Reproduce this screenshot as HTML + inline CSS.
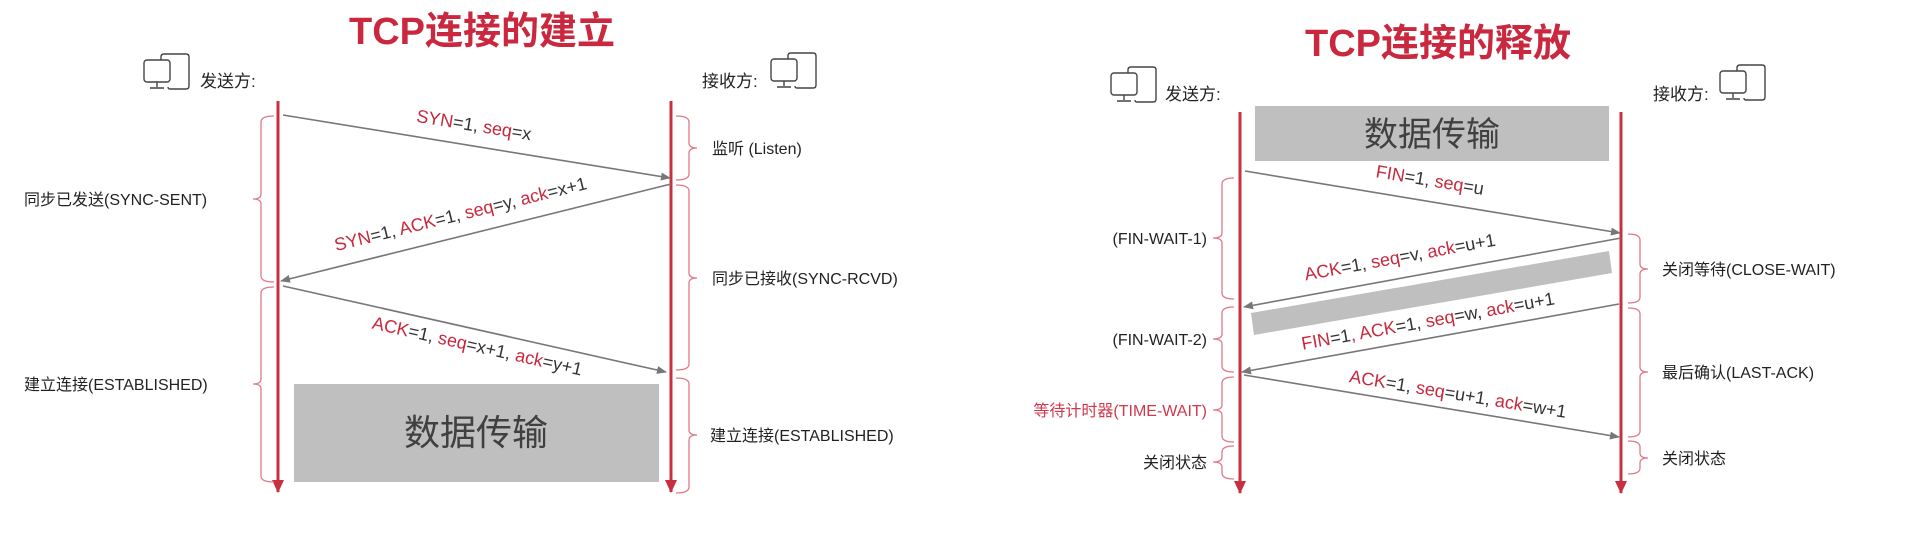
<!DOCTYPE html>
<html><head><meta charset="utf-8"><style>
html,body{margin:0;padding:0;background:#fff;}
svg{display:block;}
text{font-family:"Liberation Sans","Noto Sans CJK SC",sans-serif;}
.t{font-size:38px;font-weight:bold;fill:#c9283e;}
.l{font-size:16px;fill:#222;}
.m{font-size:17px;fill:#222;}
.r{fill:#c8283c;}
.lab{font-size:18px;fill:#333;}
.br{fill:none;stroke:#e07a88;stroke-width:1.3;}
.ar{stroke:#777;stroke-width:1.6;fill:none;}
.ico{fill:none;stroke:#444;stroke-width:1.4;}
</style></head><body>
<svg width="1930" height="559" viewBox="0 0 1930 559" xmlns="http://www.w3.org/2000/svg">
<defs>
<marker id="ah" markerWidth="10" markerHeight="8" refX="9" refY="4" orient="auto" markerUnits="userSpaceOnUse"><path d="M0,0 L10,4 L0,8 z" fill="#777"/></marker>
<marker id="rh" markerWidth="14" markerHeight="12" refX="12" refY="6" orient="auto" markerUnits="userSpaceOnUse"><path d="M0,0 L13,6 L0,12 z" fill="#c9303f"/></marker>
<g id="icon"><rect x="0" y="6" width="26" height="22" rx="3" class="ico"/><path d="M13,28 V33 M6,34 H20" class="ico"/><path d="M17,6 V3 Q17,0 20,0 H42 Q45,0 45,3 V32 Q45,35 42,35 H26 Q24,35 24,33" class="ico"/></g>
</defs>

<!-- LEFT PANEL -->
<text x="482" y="44" text-anchor="middle" class="t">TCP连接的建立</text>
<use href="#icon" x="144" y="54"/>
<text x="200" y="87" class="m">发送方:</text>
<text x="702" y="87" class="m">接收方:</text>
<use href="#icon" x="771" y="53"/>

<line x1="278" y1="101" x2="278" y2="492" stroke="#c9303f" stroke-width="3" marker-end="url(#rh)"/>
<line x1="671" y1="101" x2="671" y2="492" stroke="#c9303f" stroke-width="3" marker-end="url(#rh)"/>

<rect x="294" y="384" width="365" height="98" fill="#bfbfbf"/>
<text x="476" y="445" text-anchor="middle" style="font-size:36px;fill:#404040">数据传输</text>

<line x1="283" y1="115" x2="670" y2="178" class="ar" marker-end="url(#ah)"/>
<line x1="671" y1="184" x2="281" y2="281" class="ar" marker-end="url(#ah)"/>
<line x1="283" y1="286" x2="666" y2="372" class="ar" marker-end="url(#ah)"/>

<text class="lab" text-anchor="middle" transform="translate(473,131) rotate(9.2)"><tspan class="r">SYN</tspan>=1, <tspan class="r">seq</tspan>=x</text>
<text class="lab" text-anchor="middle" transform="translate(462,220) rotate(-13.9)"><tspan class="r">SYN</tspan>=1, <tspan class="r">ACK</tspan>=1, <tspan class="r">seq</tspan>=y, <tspan class="r">ack</tspan>=x+1</text>
<text class="lab" text-anchor="middle" transform="translate(476,352) rotate(12.7)"><tspan class="r">ACK</tspan>=1, <tspan class="r">seq</tspan>=x+1, <tspan class="r">ack</tspan>=y+1</text>

<path class="br" d="M274,116 Q261,116 261,122 L261,194 Q261,199 253,199 Q261,199 261,204 L261,276 Q261,282 274,282"/>
<path class="br" d="M274,287 Q261,287 261,293 L261,379 Q261,384 253,384 Q261,384 261,389 L261,476 Q261,482 274,482"/>
<text x="24" y="205" class="l">同步已发送(SYNC-SENT)</text>
<text x="24" y="390" class="l">建立连接(ESTABLISHED)</text>

<path class="br" d="M676,116 Q689,116 689,122 L689,143 Q689,148 697,148 Q689,148 689,153 L689,174 Q689,180 676,180"/>
<path class="br" d="M676,185 Q689,185 689,191 L689,273 Q689,278 697,278 Q689,278 689,283 L689,364 Q689,370 676,370"/>
<path class="br" d="M676,378 Q689,378 689,384 L689,430 Q689,435 697,435 Q689,435 689,440 L689,487 Q689,493 676,493"/>
<text x="712" y="154" class="l">监听 (Listen)</text>
<text x="712" y="284" class="l">同步已接收(SYNC-RCVD)</text>
<text x="710" y="441" class="l">建立连接(ESTABLISHED)</text>

<!-- RIGHT PANEL -->
<text x="1438" y="56" text-anchor="middle" class="t">TCP连接的释放</text>
<use href="#icon" x="1111" y="67"/>
<text x="1165" y="100" class="m">发送方:</text>
<text x="1653" y="100" class="m">接收方:</text>
<use href="#icon" x="1720" y="65"/>

<line x1="1240" y1="112" x2="1240" y2="493" stroke="#c9303f" stroke-width="3" marker-end="url(#rh)"/>
<line x1="1621" y1="112" x2="1621" y2="493" stroke="#c9303f" stroke-width="3" marker-end="url(#rh)"/>

<rect x="1255" y="106" width="354" height="55" fill="#bfbfbf"/>
<text x="1432" y="146" text-anchor="middle" style="font-size:34px;fill:#404040">数据传输</text>
<polygon points="1251,313 1609,251 1612,273 1254,335" fill="#bfbfbf"/>

<line x1="1245" y1="171" x2="1620" y2="233" class="ar" marker-end="url(#ah)"/>
<line x1="1621" y1="238" x2="1244" y2="307" class="ar" marker-end="url(#ah)"/>
<line x1="1619" y1="304" x2="1242" y2="372" class="ar" marker-end="url(#ah)"/>
<line x1="1244" y1="375" x2="1619" y2="437" class="ar" marker-end="url(#ah)"/>

<text class="lab" text-anchor="middle" transform="translate(1429,186) rotate(9.4)"><tspan class="r">FIN</tspan>=1, <tspan class="r">seq</tspan>=u</text>
<text class="lab" text-anchor="middle" transform="translate(1401,263) rotate(-10.4)"><tspan class="r">ACK</tspan>=1, <tspan class="r">seq</tspan>=v, <tspan class="r">ack</tspan>=u+1</text>
<text class="lab" text-anchor="middle" transform="translate(1429,327) rotate(-10.2)"><tspan class="r">FIN</tspan>=1<tspan class="r">, ACK</tspan>=1, <tspan class="r">seq</tspan>=w, <tspan class="r">ack</tspan>=u+1</text>
<text class="lab" text-anchor="middle" transform="translate(1457,400) rotate(9.4)"><tspan class="r">ACK</tspan>=1, <tspan class="r">seq</tspan>=u+1, <tspan class="r">ack</tspan>=w+1</text>

<path class="br" d="M1234,178 Q1222,178 1222,184 L1222,233 Q1222,238 1213,238 Q1222,238 1222,243 L1222,293 Q1222,299 1234,299"/>
<path class="br" d="M1234,307 Q1222,307 1222,313 L1222,334 Q1222,339 1213,339 Q1222,339 1222,344 L1222,366 Q1222,372 1234,372"/>
<path class="br" d="M1234,377 Q1222,377 1222,383 L1222,405 Q1222,410 1213,410 Q1222,410 1222,415 L1222,436 Q1222,442 1234,442"/>
<path class="br" d="M1234,446 Q1222,446 1222,452 L1222,457 Q1222,462 1213,462 Q1222,462 1222,467 L1222,473 Q1222,479 1234,479"/>
<text x="1207" y="244" text-anchor="end" class="l">(FIN-WAIT-1)</text>
<text x="1207" y="345" text-anchor="end" class="l">(FIN-WAIT-2)</text>
<text x="1207" y="416" text-anchor="end" class="l" style="fill:#d0384c">等待计时器(TIME-WAIT)</text>
<text x="1207" y="468" text-anchor="end" class="l">关闭状态</text>

<path class="br" d="M1628,234 Q1640,234 1640,240 L1640,264 Q1640,269 1648,269 Q1640,269 1640,274 L1640,297 Q1640,303 1628,303"/>
<path class="br" d="M1628,308 Q1640,308 1640,314 L1640,367 Q1640,372 1648,372 Q1640,372 1640,377 L1640,431 Q1640,437 1628,437"/>
<path class="br" d="M1628,441 Q1640,441 1640,447 L1640,453 Q1640,458 1648,458 Q1640,458 1640,463 L1640,468 Q1640,474 1628,474"/>
<text x="1662" y="275" class="l">关闭等待(CLOSE-WAIT)</text>
<text x="1662" y="378" class="l">最后确认(LAST-ACK)</text>
<text x="1662" y="464" class="l">关闭状态</text>
</svg>
</body></html>
